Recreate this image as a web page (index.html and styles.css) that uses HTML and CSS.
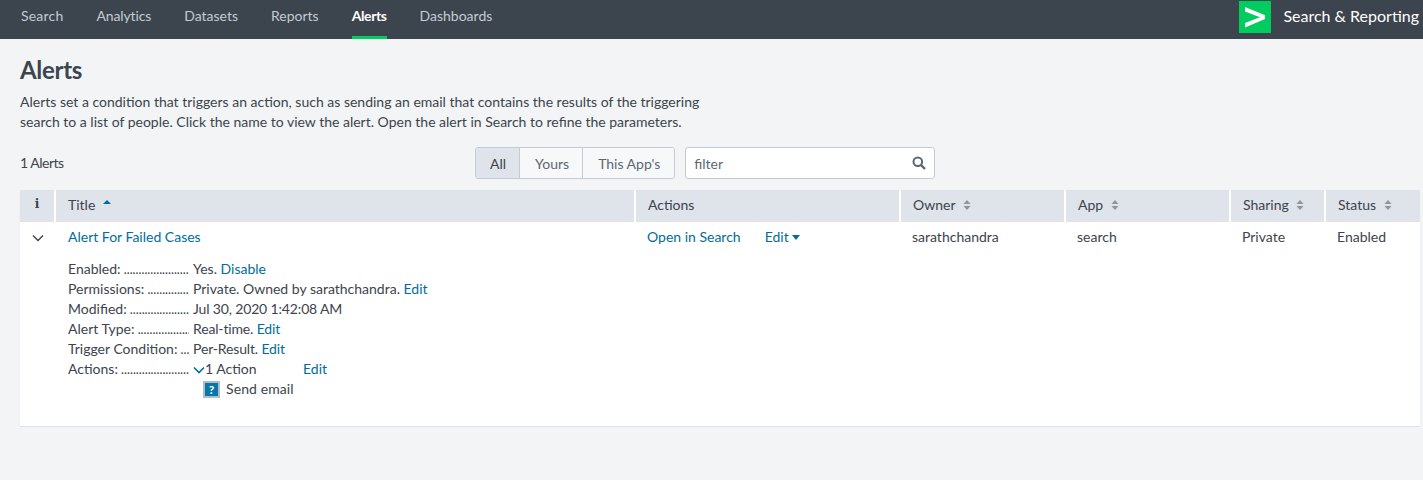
FILE: index.html
```html
<!DOCTYPE html>
<html lang="en">
<head>
  <meta charset="UTF-8">
  <title>Alerts</title>
  <link rel="stylesheet" href="styles.css">
</head>
<body>

  <header class="topbar">
    <nav class="nav">
      <a href="#" class="first">Search</a>
      <a href="#" class="second">Analytics</a>
      <a href="#">Datasets</a>
      <a href="#">Reports</a>
      <a href="#" class="active">Alerts</a>
      <a href="#">Dashboards</a>
    </nav>
    <div class="brand">
      <span class="logo">
        <svg width="32" height="32" viewBox="0 0 32 32"><path d="M6 6 L26 14.3 V18 L6 26.5 V22 L21 16.2 L6 10.5 Z" fill="#fff"/></svg>
      </span>
      <span class="app-name">Search &amp; Reporting</span>
    </div>
  </header>

  <main class="page">
    <h1>Alerts</h1>
    <p class="intro">Alerts set a condition that triggers an action, such as sending an email that contains the results of the triggering<br>search to a list of people. Click the name to view the alert. Open the alert in Search to refine the parameters.</p>

    <div class="toolbar">
      <span class="count">1 Alerts</span>
      <div class="filters">
        <div class="btn-group">
          <button class="selected">All</button>
          <button class="yours">Yours</button>
          <button class="this-app">This App's</button>
        </div>
        <div class="filter-box">
          <span>filter</span>
          <svg width="14" height="14" viewBox="0 0 14 14"><circle cx="5.8" cy="5.8" r="4.3" fill="none" stroke="#5c6773" stroke-width="2"/><path d="M9 9 L13 13" stroke="#5c6773" stroke-width="2.4"/></svg>
        </div>
      </div>
    </div>

    <table class="alerts">
      <colgroup>
        <col class="c-info"><col class="c-title"><col class="c-actions"><col class="c-owner"><col class="c-app"><col class="c-sharing"><col class="c-status">
      </colgroup>
      <thead>
        <tr>
          <th class="info">i</th>
          <th>Title <svg class="sort" width="8" height="10" viewBox="0 0 8 10"><path d="M4 0 L8 4 H0 Z" fill="#006d9c"/></svg></th>
          <th>Actions</th>
          <th>Owner <svg class="sort" width="8" height="10" viewBox="0 0 8 10"><path d="M4 0 L7.5 4 H.5 Z M4 10 L7.5 6 H.5 Z" fill="#8d96a0"/></svg></th>
          <th>App <svg class="sort" width="8" height="10" viewBox="0 0 8 10"><path d="M4 0 L7.5 4 H.5 Z M4 10 L7.5 6 H.5 Z" fill="#8d96a0"/></svg></th>
          <th>Sharing <svg class="sort" width="8" height="10" viewBox="0 0 8 10"><path d="M4 0 L7.5 4 H.5 Z M4 10 L7.5 6 H.5 Z" fill="#8d96a0"/></svg></th>
          <th>Status <svg class="sort" width="8" height="10" viewBox="0 0 8 10"><path d="M4 0 L7.5 4 H.5 Z M4 10 L7.5 6 H.5 Z" fill="#8d96a0"/></svg></th>
        </tr>
      </thead>
      <tbody>
        <tr>
          <td class="toggle"><svg width="12" height="8" viewBox="0 0 12 8"><path d="M1 1.5 L6 6.5 L11 1.5" fill="none" stroke="#3c444d" stroke-width="1.4"/></svg></td>
          <td class="title-cell"><a href="#">Alert For Failed Cases</a></td>
          <td class="row-actions"><a href="#">Open in Search</a><a href="#">Edit <svg width="8" height="5" viewBox="0 0 8 5"><path d="M0 0 H8 L4 5 Z" fill="#006d9c"/></svg></a></td>
          <td>sarathchandra</td>
          <td>search</td>
          <td>Private</td>
          <td>Enabled</td>
        </tr>
        <tr>
          <td></td>
          <td colspan="6" class="details">
            <dl>
              <div class="line"><dt>Enabled:</dt><dd>Yes. <a href="#">Disable</a></dd></div>
              <div class="line"><dt>Permissions:</dt><dd>Private. Owned by sarathchandra. <a href="#">Edit</a></dd></div>
              <div class="line"><dt>Modified:</dt><dd class="tight">Jul 30, 2020 1:42:08 AM</dd></div>
              <div class="line"><dt>Alert Type:</dt><dd class="tight">Real-time. <a href="#">Edit</a></dd></div>
              <div class="line"><dt>Trigger Condition:</dt><dd class="tight">Per-Result. <a href="#">Edit</a></dd></div>
              <div class="line"><dt>Actions:</dt><dd class="action-count"><svg width="12" height="8" viewBox="0 0 12 8"><path d="M1 1.5 L6 6.5 L11 1.5" fill="none" stroke="#006d9c" stroke-width="1.6"/></svg><span class="action-label">1 Action</span><a href="#">Edit</a></dd></div>
              <div class="line"><dt class="blank"></dt><dd class="action-item"><span class="q-icon">?</span>Send email</dd></div>
            </dl>
          </td>
        </tr>
      </tbody>
    </table>
  </main>

</body>
</html>
```

FILE: styles.css
```css
body {
  font-family: Lato, 'Open Sans', sans-serif;
  font-size: 14px;
  margin: 0;
  background: #f2f4f5;
  color: #3c444d;
  height: 480px;
  overflow: hidden;
}
a {
  color: #006d9c;
  text-decoration: none;
}
.topbar {
  background: #3c444d;
  height: 39px;
  display: flex;
  justify-content: space-between;
}
.nav {
  display: flex;
  gap: 33px;
  padding-left: 21px;
}
.nav a {
  color: #c3cbd4;
  height: 36px;
  line-height: 32px;
  border-bottom: 3px solid transparent;
}
.nav a.first {
  letter-spacing: .2px;
}
.nav a.second {
  letter-spacing: -.12px;
}
.nav a.active {
  color: #fff;
  font-weight: 700;
  letter-spacing: -.4px;
  border-bottom-color: #00cc5f;
}
.brand {
  display: flex;
  gap: 12px;
  padding: 1px 4px 0 0;
}
.logo {
  width: 32px;
  height: 32px;
  background: #00cc5f;
}
.logo svg {
  display: block;
}
.app-name {
  color: #fff;
  font-size: 16px;
  line-height: 29px;
}
.page {
  padding: 0 3px 0 20px;
}
h1 {
  font-size: 24px;
  font-weight: 700;
  letter-spacing: -.3px;
  line-height: 28px;
  margin: 17px 0 0;
}
.intro {
  margin: 8px 0 0;
  line-height: 20px;
}
.toolbar {
  display: flex;
  align-items: center;
  height: 32px;
  margin-top: 15px;
}
.count {
  width: 455px;
  letter-spacing: -.5px;
  margin-top: -1px;
}
.filters {
  display: flex;
  gap: 10px;
}
.btn-group {
  display: flex;
  border: 1px solid #c3cbd4;
  border-radius: 3px;
  overflow: hidden;
}
.btn-group button {
  font: inherit;
  color: #5c6773;
  background: #f7f8fa;
  border: none;
  border-left: 1px solid #c3cbd4;
  padding: 0 14px;
  height: 30px;
}
.btn-group button:first-child {
  border-left: none;
}
.btn-group .selected {
  background: #dfe3ea;
  color: #3c444d;
  padding-right: 13px;
}
.btn-group .yours {
  padding: 0 13px 0 15px;
}
.btn-group .this-app {
  padding-left: 15px;
}
.filter-box {
  width: 232px;
  height: 30px;
  background: #fff;
  border: 1px solid #c3cbd4;
  border-radius: 3px;
  display: flex;
  align-items: center;
  justify-content: space-between;
  padding: 0 8px;
  color: #5c6773;
}
.alerts {
  width: 1400px;
  margin-top: 11px;
  table-layout: fixed;
  border-collapse: collapse;
  background: #fff;
  box-shadow: 0 1px 1px #e1e5ea;
}
.c-info { width: 35px; }
.c-title { width: 580px; }
.c-actions { width: 265px; }
.c-owner { width: 165px; }
.c-app { width: 165px; }
.c-sharing { width: 95px; }
.c-status { width: 95px; }
.alerts th {
  background: #dfe3ea;
  height: 28px;
  padding: 0 12px 4px;
  text-align: left;
  font-weight: 400;
  border-left: 2px solid #fff;
}
.alerts th:first-child {
  border-left: none;
}
.alerts th.info {
  font-family: 'DejaVu Serif', serif;
  font-weight: 700;
  font-size: 12px;
  text-align: center;
  padding: 0 0 4px;
}
.sort {
  margin-left: 4px;
}
.alerts td {
  height: 28px;
  padding: 0 12px 3px;
  vertical-align: middle;
}
.alerts td.toggle {
  padding: 0 0 3px;
  text-align: center;
}
.alerts td.title-cell {
  padding-left: 13px;
}
.row-actions a + a {
  margin-left: 24px;
}
.row-actions svg {
  vertical-align: 2px;
}
.alerts td.details {
  padding: 6px 12px 27px 13px;
  vertical-align: top;
}
dl {
  margin: 0;
}
.line {
  display: flex;
  height: 20px;
  line-height: 20px;
}
dt {
  width: 121px;
  margin-right: 4px;
  overflow: hidden;
  white-space: nowrap;
}
dt::after {
  content: " ...........................................";
  font-size: 12.5px;
}
dt.blank::after {
  content: "";
}
dd {
  margin: 0;
}
dd.tight {
  letter-spacing: -.15px;
}
.action-label {
  display: inline-block;
  width: 98px;
}
.action-item {
  display: flex;
  align-items: center;
  margin-left: 10px;
  letter-spacing: .1px;
}
.q-icon {
  width: 13px;
  height: 13px;
  border: 2px solid #b0bccb;
  background: #0877a6;
  color: #fff;
  font-size: 12px;
  font-weight: 700;
  line-height: 13px;
  text-align: center;
  margin-right: 6px;
}
```
